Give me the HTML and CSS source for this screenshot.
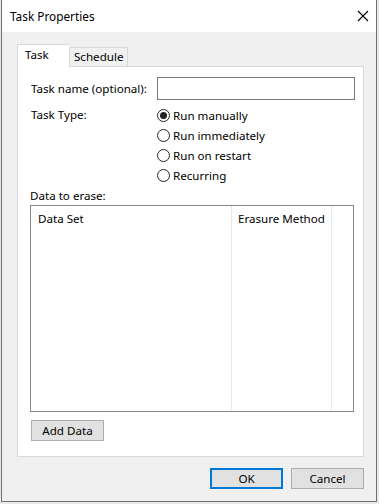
FILE: index.html
```html
<!DOCTYPE html>
<html lang="en">
<head>
    <meta charset="UTF-8">
    <meta name="viewport" content="width=device-width, initial-scale=1.0">
    <title>Task Properties</title>
    <link rel="stylesheet" href="styles.css">
</head>
<body>
    <div class="window">
        <div class="titlebar">
            <span class="title">Task Properties</span>
            <svg class="close" width="12" height="12" viewBox="0 0 12 12">
                <path d="M1 1 L11 11 M11 1 L1 11" stroke="#000" stroke-width="1.1" fill="none"/>
            </svg>
        </div>
        <div class="client">
            <div class="tabs">
                <div class="tab active">Task</div>
                <div class="tab">Schedule</div>
            </div>
            <div class="panel">
                <div class="row name-row">
                    <div class="label">Task name (optional):</div>
                    <input class="textbox" type="text">
                </div>
                <div class="row type-row">
                    <div class="label">Task Type:</div>
                    <div class="radios">
                        <label class="radio"><span class="dot checked"></span>Run manually</label>
                        <label class="radio"><span class="dot"></span>Run immediately</label>
                        <label class="radio"><span class="dot"></span>Run on restart</label>
                        <label class="radio"><span class="dot"></span>Recurring</label>
                    </div>
                </div>
                <div class="erase-label">Data to erase:</div>
                <div class="listview">
                    <div class="col col-set"><div class="head">Data Set</div></div>
                    <div class="col col-method"><div class="head">Erasure Method</div></div>
                    <div class="col col-rest"></div>
                </div>
                <button class="btn add-btn">Add Data</button>
            </div>
            <div class="footer">
                <button class="btn ok-btn">OK</button>
                <button class="btn">Cancel</button>
            </div>
        </div>
    </div>
</body>
</html>
```

FILE: styles.css
```css
body {
    margin: 0;
    background-color: #e9e9e9;
    font-family: "Noto Sans", "Liberation Sans", sans-serif;
    font-size: 11.6px;
    color: #000;
}
.window {
    width: 376px;
    height: 502px;
    margin-left: 1px;
    box-sizing: border-box;
    border: 1px solid #6f6f6f;
    border-top: none;
    background: #f0f0f0;
    display: flex;
    flex-direction: column;
}
.titlebar {
    height: 32px;
    background: #fff;
    display: flex;
    align-items: center;
    justify-content: space-between;
    padding: 0 7px 0 8px;
}
.title {
    font-size: 11.8px;
    margin-top: -1px;
}
.tabs {
    display: flex;
    align-items: flex-end;
    height: 22px;
    position: relative;
    z-index: 1;
}
.client {
    padding: 12px 12px 0 15px;
}
.tab {
    box-sizing: border-box;
    height: 19px;
    padding: 0 4px 0 4px;
    border: 1px solid #d9d9d9;
    border-bottom: none;
    background: #f0f0f0;
    line-height: 18px;
}
.tab.active {
    height: 23px;
    width: 52px;
    padding-left: 7px;
    background: #fff;
    line-height: 20px;
    margin-bottom: -1px;
    border-right: none;
}
.panel {
    height: 391px;
    box-sizing: border-box;
    border: 1px solid #d9d9d9;
    background: #fff;
    padding: 10px 6px 0 13px;
}
.row {
    display: flex;
}
.label {
    width: 126px;
    flex: none;
}
.name-row {
    align-items: center;
    height: 23px;
}
.textbox {
    width: 198px;
    height: 23px;
    box-sizing: border-box;
    border: 1px solid #7a7a7a;
    margin: 0;
    padding: 0 3px;
}
.type-row {
    margin-top: 5px;
}
.type-row .label {
    line-height: 20px;
}
.radios {
    display: flex;
    flex-direction: column;
}
.radio {
    display: flex;
    align-items: center;
    height: 20px;
}
.dot {
    width: 13px;
    height: 13px;
    box-sizing: border-box;
    border: 1px solid #222;
    border-radius: 50%;
    margin-right: 3px;
    display: flex;
    align-items: center;
    justify-content: center;
}
.dot.checked::after {
    content: "";
    width: 7px;
    height: 7px;
    border-radius: 50%;
    background: #222;
}
.erase-label {
    height: 20px;
    line-height: 22px;
    margin-left: -1px;
}
.listview {
    margin-left: -1px;
    width: 324px;
    height: 207px;
    box-sizing: border-box;
    border: 1px solid #828790;
    display: flex;
}
.col {
    height: 100%;
    box-sizing: border-box;
}
.col-set {
    width: 201px;
    border-right: 1px solid #e5e9ee;
}
.col-method {
    width: 100px;
    border-right: 1px solid #e5e9ee;
}
.head {
    padding: 3px 0 0 7px;
    height: 22px;
    line-height: 20px;
}
.col-method .head {
    padding-left: 6px;
}
.btn {
    font-family: inherit;
    font-size: 11.6px;
    color: #000;
    background: #e1e1e1;
    border: 1px solid #adadad;
    width: 73px;
    height: 21px;
    padding: 0;
    margin: 0;
    box-sizing: border-box;
}
.add-btn {
    margin-top: 8px;
}
.footer {
    display: flex;
    justify-content: flex-end;
    gap: 8px;
    margin-top: 11px;
}
.ok-btn {
    border: 2px solid #0078d7;
}
```
